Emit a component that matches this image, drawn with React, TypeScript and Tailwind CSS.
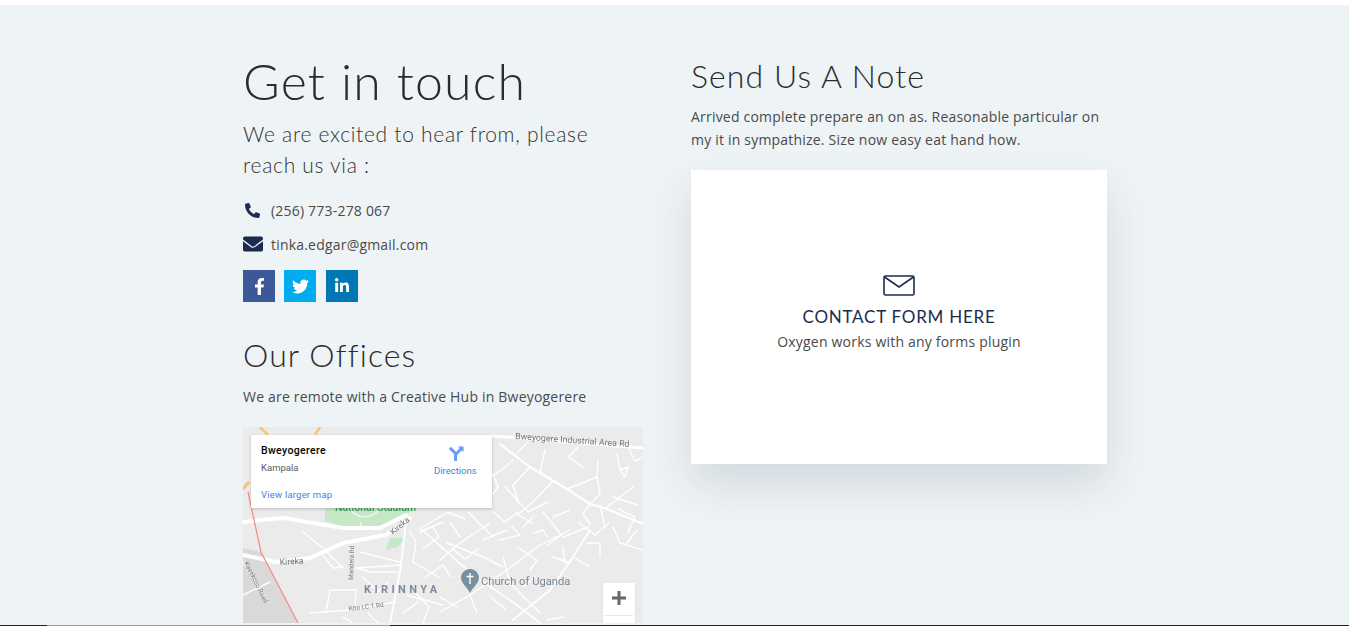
import React from 'react'
import { FaEnvelope, FaFacebookF, FaLinkedinIn, FaPhoneAlt, FaTwitter } from 'react-icons/fa'

const minorRoads = [
  'M287 40 L270 58 L275 75',
  'M309 55 L290 75 L274 88',
  'M324 62 L354 50 L355 33',
  'M354 50 L357 67 L347 77',
  'M297 45 L302 23',
  'M374 27 L377 43 L385 40 L382 50 L377 43',
  'M364 80 L390 60',
  'M347 77 L340 87 L347 97',
  'M357 78 L362 100',
  'M247 50 L260 42 L270 33',
  'M250 47 L255 60 L250 67',
  'M274 87 L290 97',
  'M310 90 L327 83',
  'M60 105 L80 121 L100 141',
  'M80 128 L90 141 L100 140',
  'M117 125 L157 135',
  'M113 141 L157 138',
  'M87 163 L113 163 L112 181',
  'M87 163 L83 185',
  'M67 186 L107 183 L153 175',
  'M157 145 L127 145 L113 141',
  'M167 105 L173 115 L170 135 L197 151',
  'M177 105 L200 95',
  'M0 135 L25 175',
  'M0 168 L27 155',
  'M163 168 L200 178',
  'M197 133 L217 116 L247 96',
  'M204 116 L240 130 L260 140',
  'M197 185 L227 168 L264 143 L294 120 L327 103',
  'M260 130 L267 156 L297 186',
  'M227 168 L234 186',
  'M310 130 L327 136',
  'M320 120 L322 136',
  'M344 116 L357 116 L357 130',
  'M330 130 L347 140',
  'M274 120 L294 133 L287 143',
  'M240 113 L264 103',
  'M257 113 L277 108 L269 100',
  'M207 95 L217 110',
  'M290 106 L300 103 L304 110',
  'M370 100 L377 116 L400 123',
  'M384 116 L394 103',
  'M304 193 L320 190',
  'M197 170 L214 180',
  'M180 100 L205 85 L222 92',
  'M225 85 L250 110',
  'M262 60 L285 85 L305 75',
  'M300 85 L320 110 L345 100',
  'M375 82 L392 90 L385 105',
  'M180 122 L196 110 L190 100',
  'M183 150 L200 138 L208 150',
  'M210 122 L222 132 L235 122',
  'M250 85 L262 95 L275 85',
  'M280 100 L290 90',
  'M305 118 L318 108',
  'M335 95 L352 108 L366 96',
  'M370 70 L395 78',
  'M340 40 L325 30 L335 20',
  'M385 20 L392 34 L400 30',
  'M275 25 L285 15',
  'M172 165 L186 180 L180 196',
  'M120 150 L135 165 L145 155',
  'M160 186 L175 175',
  'M100 190 L110 196',
  'M125 186 L135 196',
  'M248 170 L262 182',
  'M280 160 L292 150',
]

const GoogleMap = () => (
  <div className="relative mt-[18px] mb-[2px] h-[196px] w-[400px] overflow-hidden bg-[#ebebeb]">
    <svg className="absolute inset-0 blur-[0.4px]" width="400" height="196" viewBox="0 0 400 196" fill="none">
      <path d="M0 121 L18 125 L55 196 L0 196 Z" fill="#d9d9d9" />
      <path d="M82 80 H175 L150 96 L137 100 L100 100 L82 94 Z" fill="#c6e8c6" />
      <path d="M147 111 H162 L155 120 L143 123 Z" fill="#c6e8c6" />
      <path d="M105 80 Q120 100 140 80 M118 95 V101" stroke="#f4f4f4" strokeWidth="1.5" />
      <g stroke="#fff" strokeWidth="1.4" strokeLinecap="round" strokeLinejoin="round">
        {minorRoads.map(d => (
          <path key={d} d={d} />
        ))}
      </g>
      <g stroke="#fff" strokeLinecap="round" strokeLinejoin="round">
        <path d="M0 128 L33 135 L67 131 L100 116 L143 108 L167 91" strokeWidth="4" />
        <path d="M0 95 L40 91 L100 101 L137 101 L163 88" strokeWidth="4" />
        <path d="M249 9 L400 21" strokeWidth="3" />
        <path d="M257 17 L287 40 L324 62 L347 77 L364 82 L400 97" strokeWidth="2.2" />
        <path d="M347 103 L330 130 L307 163 L270 193" strokeWidth="1.8" />
        <path d="M163 95 L157 145 L147 196" strokeWidth="1.8" />
        <path d="M177 101 L230 148 L274 178 L297 196" strokeWidth="1.6" />
      </g>
      <path d="M5 65 L18 125 L55 196" stroke="#f28b7e" strokeWidth="1.2" />
      <path d="M17 0 L25 8 M72 8 L77 0" stroke="#f2c878" strokeWidth="2.5" />
      <path d="M0 62 L6 55" stroke="#f5c56e" strokeWidth="3" />
      <path d="M227 142 C221.5 142 218 146.5 218 151 C218 156 224 160 227 166 C230 160 236 156 236 151 C236 146.5 232.5 142 227 142 Z" fill="#76919f" />
      <path d="M227 146 V157 M223.5 149.5 H230.5" stroke="#fff" strokeWidth="1.4" />
      <g fontFamily="Roboto, sans-serif">
        <text x="238" y="158" fontSize="11.2" fill="#7b8894">Church of Uganda</text>
        <text x="121" y="166" fontSize="11" fontWeight="700" letterSpacing="3.4" fill="#7e8b9c">KIRINNYA</text>
        <text x="37" y="138" fontSize="8.5" fill="#6f6f6f" transform="rotate(-4 37 138)">Kireka</text>
        <text x="150" y="108" fontSize="8" fill="#6f6f6f" transform="rotate(-40 150 108)">Kireka</text>
        <text x="110" y="153" fontSize="6.5" fill="#7b7b7b" transform="rotate(-88 110 153)">Mandela Rd</text>
        <text x="1" y="136" fontSize="6.5" fill="#7b7b7b" transform="rotate(63 1 136)">Kasokoso Road</text>
        <text x="106" y="184" fontSize="6.5" fill="#7b7b7b" transform="rotate(-7 106 184)">Kito LC 1 Rd</text>
        <text x="272" y="12" fontSize="8.8" fill="#777" transform="rotate(4 272 12)">Bweyogere Industrial Area Rd</text>
        <text x="92" y="84" fontSize="10.5" fontWeight="500" fill="#3f9a5b">National Stadium</text>
      </g>
    </svg>
    <div className="absolute left-[8px] top-[8px] h-[73px] w-[241px] bg-white shadow-[0_1px_3px_rgba(0,0,0,0.2)] font-['Roboto',sans-serif]">
      <p className="absolute left-[10px] top-[10px] text-[10.5px] leading-[12px] font-medium tracking-[0.35px] text-black">Bweyogerere</p>
      <p className="absolute left-[10px] top-[27px] text-[9.5px] leading-[12px] text-[#5b5b5b]">Kampala</p>
      <p className="absolute left-[10px] top-[54px] text-[9.5px] leading-[12px] tracking-[0.2px] text-[#3a84df]">View larger map</p>
      <svg className="absolute left-[198px] top-[11px]" width="15" height="15" viewBox="0 0 16 16" fill="none">
        <path d="M1 2 L7 8 V16 M14 2 L7.5 8.5" stroke="#669df6" strokeWidth="3.2" />
        <path d="M9.5 0.5 H15.5 V6.5 Z" fill="#669df6" />
      </svg>
      <p className="absolute left-[183px] top-[30px] text-[9.5px] leading-[12px] text-[#3a84df]">Directions</p>
    </div>
    <div className="absolute left-[360px] top-[156px] flex h-[44px] w-[32px] flex-col items-center bg-white shadow-[0_1px_2px_rgba(0,0,0,0.1)]">
      <svg className="mt-[8px]" width="14" height="14" viewBox="0 0 14 14">
        <path d="M0 5.5 H5.5 V0 H8.5 V5.5 H14 V8.5 H8.5 V14 H5.5 V8.5 H0 Z" fill="#666" />
      </svg>
      <div className="mt-[10px] h-px w-[28px] bg-[#e6e6e6]" />
    </div>
  </div>
)

const ContactRow = ({ icon, text }: { icon: React.ReactNode; text: string }) => (
  <div className="flex h-[20px] items-center">
    <div className="flex w-[28px] justify-start">{icon}</div>
    <span className="text-[14px] tracking-[0.2px] text-[#4a4a4a]">{text}</span>
  </div>
)

const Left = () => (
  <div className="w-[400px] shrink-0">
    <h1 className="font-['Lato',sans-serif] text-[50px] leading-[60px] font-light tracking-[1.2px] text-[#2b2b2b]">Get in touch</h1>
    <p className="mt-[7px] font-['Lato',sans-serif] text-[21px] leading-[31px] font-light tracking-[0.7px] text-[#333]">
      We are excited to hear from, please
      <br />
      reach us via :
    </p>
    <div className="mt-[20px] flex flex-col gap-[14px]">
      <ContactRow icon={<FaPhoneAlt className="ml-[2px] text-[15px] text-[#1b2d4f]" />} text="(256) 773-278 067" />
      <ContactRow icon={<FaEnvelope className="text-[20px] text-[#1b2d4f]" />} text="tinka.edgar@gmail.com" />
    </div>
    <div className="mt-[16px] flex gap-[9px]">
      <div className="flex h-[32px] w-[32px] items-center justify-center bg-[#3b5998] text-white">
        <FaFacebookF className="text-[17px]" />
      </div>
      <div className="flex h-[32px] w-[32px] items-center justify-center bg-[#00acee] text-white">
        <FaTwitter className="text-[17px]" />
      </div>
      <div className="ml-px flex h-[32px] w-[32px] items-center justify-center bg-[#0077b5] text-white">
        <FaLinkedinIn className="text-[16px]" />
      </div>
    </div>
    <h2 className="mt-[33px] font-['Lato',sans-serif] text-[32px] leading-[40px] font-light tracking-[1.1px] text-[#2b2b2b]">Our Offices</h2>
    <p className="mt-[10px] text-[14px] leading-[24px] tracking-[0.2px] text-[#4a4a4a]">We are remote with a Creative Hub in Bweyogerere</p>
    <GoogleMap />
  </div>
)

const Right = () => (
  <div className="ml-[48px] w-[416px] shrink-0">
    <h2 className="pt-[5px] font-['Lato',sans-serif] text-[32px] leading-[40px] font-light tracking-[1.1px] text-[#2b2b2b]">Send Us A Note</h2>
    <p className="mt-[9px] text-[14px] leading-[23px] tracking-[0.2px] text-[#4a4a4a]">
      Arrived complete prepare an on as. Reasonable particular on
      <br />
      my it in sympathize. Size now easy eat hand how.
    </p>
    <div className="mt-[19px] flex h-[294px] flex-col items-center bg-white pt-[105px] shadow-[0_20px_40px_rgba(30,50,70,0.13)]">
      <svg width="32" height="21" viewBox="0 0 32 21" fill="none" stroke="#1b2d4f" strokeWidth="1.6">
        <rect x="1" y="1" width="30" height="19" rx="1.5" />
        <path d="M1.5 2 L16 12 L30.5 2" />
      </svg>
      <p className="mt-[9px] font-['Lato',sans-serif] text-[17px] leading-[24px] tracking-[0.75px] text-[#1b2d4f]">CONTACT FORM HERE</p>
      <p className="mt-px text-[14px] leading-[24px] tracking-[0.2px] text-[#4a4a4a]">Oxygen works with any forms plugin</p>
    </div>
  </div>
)

export default function App() {
  return (
    <div className="flex h-[626px] w-full flex-col overflow-hidden bg-white font-['Open_Sans',sans-serif]">
      <div className="h-[5px] shrink-0 bg-white" />
      <div className="flex flex-1 justify-start overflow-hidden bg-[#eef3f6] pl-[243px] pt-[46px]">
        <Left />
        <Right />
      </div>
      <div className="flex h-px shrink-0">
        <div className="w-[47px] bg-[#222]" />
        <div className="w-[343px] bg-[#999]" />
        <div className="flex-1 bg-[#222]" />
      </div>
    </div>
  )
}
